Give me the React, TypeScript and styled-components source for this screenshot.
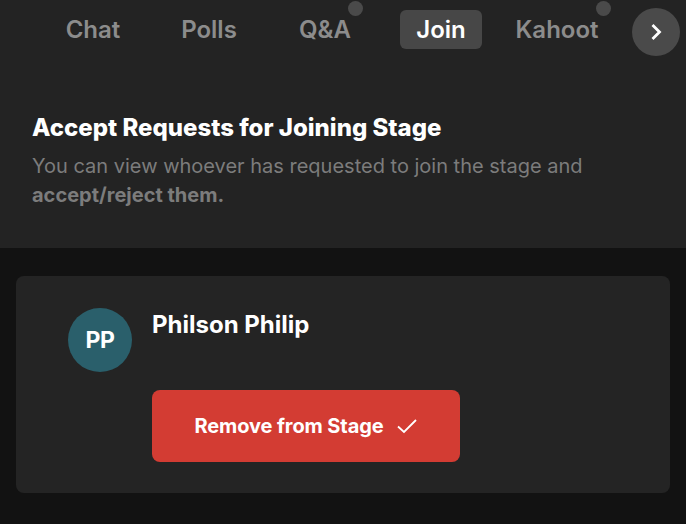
import React from "react";
import styled, { createGlobalStyle } from "styled-components";

const GlobalStyle = createGlobalStyle`
  html, body {
    margin: 0;
    padding: 0;
    background: #121212;
    font-family: Inter, "Noto Sans", sans-serif;
  }
  * { box-sizing: border-box; }
`;

const Page = styled.div`
  width: 686px;
  height: 524px;
  overflow: hidden;
  background: #121212;
  display: flex;
  flex-direction: column;
`;

const Top = styled.section`
  background: #232323;
  height: 248px;
  position: relative;
`;

const CornerArc = styled.div`
  position: absolute;
  left: -46px;
  top: -47px;
  width: 50px;
  height: 50px;
  border-radius: 50%;
  background: #555;
`;

const TabBar = styled.nav`
  display: flex;
  align-items: center;
  height: 59px;
  padding-left: 35px;
`;

const Tab = styled.div`
  flex: 0 0 116px;
  display: flex;
  justify-content: center;
`;

const TabLabel = styled.span<{ $active?: boolean }>`
  position: relative;
  display: flex;
  align-items: center;
  height: 39px;
  padding: 0 16px;
  border-radius: 6px;
  font-size: 24px;
  font-weight: 600;
  color: ${(p) => (p.$active ? "#ffffff" : "#8c8c8c")};
  background: ${(p) => (p.$active ? "#474747" : "transparent")};
`;

const Dot = styled.span`
  position: absolute;
  right: 4px;
  top: -9px;
  width: 15px;
  height: 15px;
  border-radius: 50%;
  background: #4a4a4a;
`;

const NextButton = styled.button`
  margin-left: auto;
  margin-right: 6px;
  width: 48px;
  height: 48px;
  border: none;
  border-radius: 50%;
  background: #4a4a4a;
  display: flex;
  align-items: center;
  justify-content: center;
  padding: 0;
  margin-top: 4px;
`;

const Intro = styled.div`
  padding: 54px 32px 0;
`;

const Title = styled.h2`
  margin: 0 0 9px;
  font-size: 24px;
  line-height: 30px;
  font-weight: 800;
  letter-spacing: 0;
  color: #ffffff;
`;

const Description = styled.p`
  margin: 0;
  font-size: 20px;
  line-height: 29px;
  color: #7c7c7c;
  strong {
    font-weight: 700;
  }
`;

const Body = styled.main`
  padding: 28px 16px;
`;

const Card = styled.div`
  background: #242424;
  border-radius: 8px;
  padding: 32px 52px 31px;
  display: flex;
  gap: 20px;
`;

const Avatar = styled.div`
  flex: 0 0 64px;
  width: 64px;
  height: 64px;
  border-radius: 50%;
  background: #2a5f6b;
  color: #ffffff;
  display: flex;
  align-items: center;
  justify-content: center;
  font-size: 23px;
  font-weight: 700;
  letter-spacing: -0.3px;
`;

const Info = styled.div`
  display: flex;
  flex-direction: column;
`;

const Name = styled.div`
  font-size: 24px;
  line-height: 30px;
  font-weight: 700;
  color: #ffffff;
  margin-top: 2px;
`;

const RemoveButton = styled.button`
  margin-top: 50px;
  width: 308px;
  height: 72px;
  border: none;
  border-radius: 8px;
  background: #d33c33;
  color: #ffffff;
  font-family: inherit;
  font-size: 20px;
  font-weight: 700;
  letter-spacing: -0.1px;
  display: flex;
  align-items: center;
  justify-content: center;
  gap: 12px;
`;

const tabs = [
  { label: "Chat" },
  { label: "Polls" },
  { label: "Q&A", dot: true },
  { label: "Join", active: true },
  { label: "Kahoot", dot: true },
];

export default function App() {
  return (
    <>
      <GlobalStyle />
      <Page>
        <Top>
          <CornerArc />
          <TabBar>
            {tabs.map((t) => (
              <Tab key={t.label}>
                <TabLabel $active={t.active}>
                  {t.label}
                  {t.dot && <Dot />}
                </TabLabel>
              </Tab>
            ))}
            <NextButton aria-label="Next">
              <svg width="20" height="20" viewBox="0 0 20 20" fill="none">
                <path d="M6.5 3L13.5 10L6.5 17" stroke="#fff" strokeWidth="2.8" />
              </svg>
            </NextButton>
          </TabBar>
          <Intro>
            <Title>Accept Requests for Joining Stage</Title>
            <Description>
              You can view whoever has requested to join the stage and
              <br />
              <strong>accept/reject them.</strong>
            </Description>
          </Intro>
        </Top>
        <Body>
          <Card>
            <Avatar>PP</Avatar>
            <Info>
              <Name>Philson Philip</Name>
              <RemoveButton>
                Remove from Stage
                <svg width="22" height="16" viewBox="0 0 22 16" fill="none">
                  <path d="M2 8.5L8 14L20 2" stroke="#fff" strokeWidth="1.8" />
                </svg>
              </RemoveButton>
            </Info>
          </Card>
        </Body>
      </Page>
    </>
  );
}
